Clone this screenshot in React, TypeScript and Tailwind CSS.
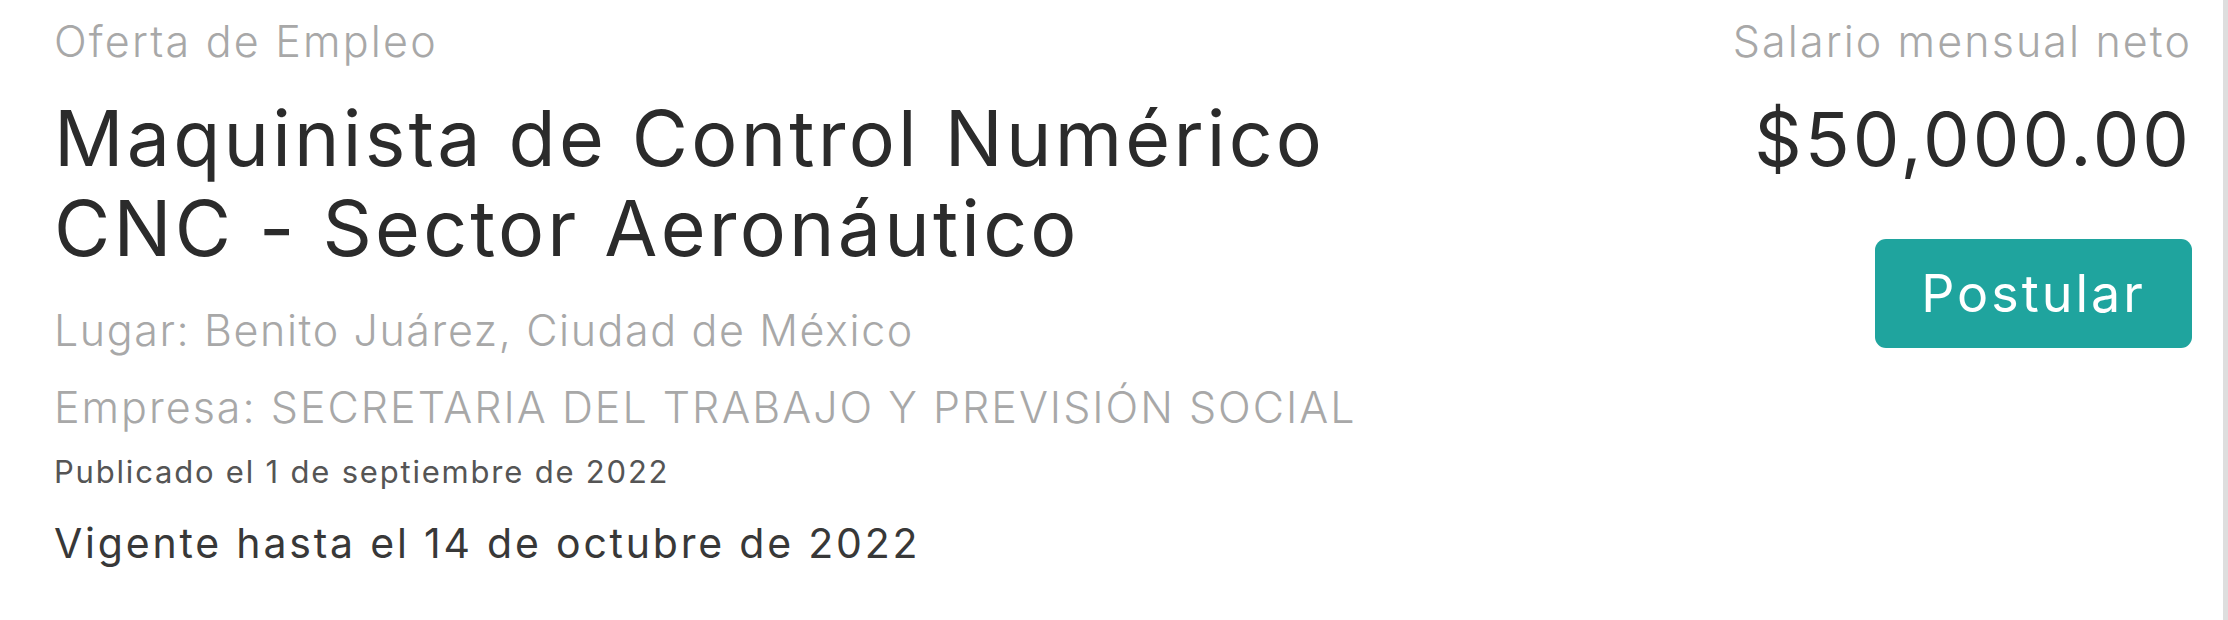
export default function App() {
  return (
    <div className="flex h-[620px] w-full justify-between border-r-[5px] border-[#dedede] bg-white pl-[54px] pr-[31px] font-['Inter','Noto_Sans',sans-serif] text-[#2e2e2e]">
      {/* Left: offer details */}
      <div className="flex flex-col">
        <div className="pt-[11px] text-[43px] font-light leading-[60px] tracking-[2.2px] text-[#a8a8a8]">Oferta de Empleo</div>
        <h1 className="mt-[22px] max-w-[1360px] text-[77px] font-normal leading-[90px] tracking-[3.2px] text-[#2b2b2b]">
          Maquinista de Control Numérico CNC - Sector Aeronáutico
        </h1>
        <div className="mt-[27px] text-[43px] font-light leading-[60px] tracking-[1.6px] text-[#a8a8a8]">
          Lugar: Benito Juárez, Ciudad de México
        </div>
        <div className="mt-[17px] text-[43px] font-light leading-[60px] tracking-[2px] text-[#a8a8a8]">
          Empresa: SECRETARIA DEL TRABAJO Y PREVISIÓN SOCIAL
        </div>
        <div className="mt-[15px] text-[31px] leading-[40px] tracking-[1.8px] text-[#555555]">
          Publicado el 1 de septiembre de 2022
        </div>
        <div className="mt-[26px] text-[41px] leading-[50px] tracking-[2.8px] text-[#383838]">
          Vigente hasta el 14 de octubre de 2022
        </div>
      </div>

      {/* Right: salary & apply */}
      <div className="flex flex-col items-end">
        <div className="pt-[11px] text-[43px] font-light leading-[60px] tracking-[2.1px] text-[#a8a8a8]">Salario mensual neto</div>
        <div className="mt-[23px] text-[74px] leading-[90px] tracking-[3px] text-[#2b2b2b]">$50,000.00</div>
        <button className="mt-[55px] flex h-[109px] w-[317px] items-center justify-center rounded-[11px] bg-[#1fa49e] text-[52px] tracking-[3px] text-white">
          Postular
        </button>
      </div>
    </div>
  );
}
